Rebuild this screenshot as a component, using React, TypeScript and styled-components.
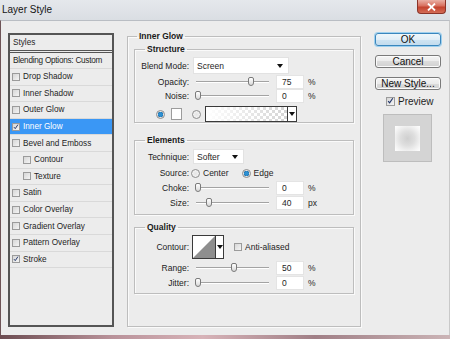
import React from "react";
import styled, { createGlobalStyle } from "styled-components";

const GlobalStyle = createGlobalStyle`
  html, body {
    margin: 0;
    padding: 0;
    background: #8d6266;
  }
  body {
    font-family: "Liberation Sans", Arial, sans-serif;
    font-size: 8.5px;
    color: #1e1e1e;
  }
`;

const Window = styled.div`
  width: 450px;
  height: 339px;
  display: flex;
  flex-direction: column;
  overflow: hidden;
  background: linear-gradient(90deg, #6d4d52 0%, #b9929a 25%, #d7b3b8 45%, #a07f86 70%, #cbb4b6 100%);
`;

const TitleBar = styled.div`
  height: 20px;
  flex: none;
  display: flex;
  align-items: flex-start;
  justify-content: space-between;
  background: linear-gradient(180deg, #e5e8ec 0%, #dadee3 100%);
`;

const Title = styled.div`
  font-size: 10px;
  line-height: 20px;
  padding-left: 2px;
  color: #151515;
`;

const CloseButton = styled.div`
  width: 29px;
  height: 14px;
  margin-right: 4px;
  box-sizing: border-box;
  display: flex;
  align-items: center;
  justify-content: center;
  border: 1px solid #8a3328;
  border-top: none;
  border-radius: 0 0 4px 4px;
  background: linear-gradient(180deg, #eab0a5 0%, #d8705f 45%, #c4432f 55%, #d36c56 100%);
`;

const Body = styled.div`
  height: 315px;
  flex: none;
  box-sizing: border-box;
  display: flex;
  align-items: flex-start;
  padding: 12px 0 0 7px;
  background: #ececec;
  border-top: 1px solid #b9bdc3;
  border-left: 1px solid #6e5457;
  border-right: 1px solid #c9c9c9;
`;

/* ---------- left list ---------- */

const StyleList = styled.div`
  width: 106px;
  height: 294px;
  box-sizing: border-box;
  border: 2px solid #555;
  background: #ececec;
  flex: none;
  font-size: 8.2px;
`;

const ListHeader = styled.div`
  height: 15px;
  line-height: 15px;
  padding-left: 3px;
  border-bottom: 3px double #555;
`;

const ListRow = styled.div<{ $h: number; $indent?: boolean; $active?: boolean; $tight?: boolean }>`
  height: ${(p) => p.$h}px;
  display: flex;
  align-items: center;
  gap: 3px;
  padding-left: ${(p) => (p.$indent ? 13 : p.$tight ? 3 : 2)}px;
  letter-spacing: ${(p) => (p.$tight ? "-0.25px" : "0")};
  border-bottom: 1px solid #d9d9d9;
  background: ${(p) => (p.$active ? "#3a97f5" : "transparent")};
  color: ${(p) => (p.$active ? "#fff" : "#1e1e1e")};
  white-space: nowrap;
  overflow: hidden;
`;

const Box = styled.span`
  width: 8px;
  height: 8px;
  flex: none;
  box-sizing: border-box;
  border: 1px solid #9b9b9b;
  background: linear-gradient(135deg, #d6d6d6 0%, #f4f4f4 100%);
  display: flex;
  align-items: center;
  justify-content: center;
`;

const Check = ({ on }: { on?: boolean }) => (
  <Box>
    {on && (
      <svg width="8" height="8" viewBox="0 0 8 8">
        <path d="M1.3 4.2 L3 6.2 L6.6 0.8" fill="none" stroke="#23366a" strokeWidth="1.3" />
      </svg>
    )}
  </Box>
);

/* ---------- group boxes ---------- */

const Group = styled.fieldset<{ $top?: number; $h?: number; $pad?: number }>`
  margin: ${(p) => p.$top ?? 0}px 0 0 0;
  padding: 0 ${(p) => p.$pad ?? 0}px 0 ${(p) => p.$pad ?? 0}px;
  border: 1px solid #bdbdbd;
  box-shadow: inset 1px 1px 0 #fafafa, 1px 1px 0 #fafafa;
  min-width: 0;
  box-sizing: border-box;
  ${(p) => (p.$h ? `height: ${p.$h}px;` : "")}
`;

const Legend = styled.legend<{ $x: number }>`
  font-weight: bold;
  font-size: 8.5px;
  line-height: 10px;
  padding: 0 2px;
  margin-left: ${(p) => p.$x}px;
  color: #1a1a1a;
`;

const MainGroup = styled(Group)`
  width: 234px;
  flex: none;
  margin: -2px 0 0 13px;
`;

const InnerBody = styled.div<{ $top: number; $bottom: number }>`
  padding: ${(p) => p.$top}px 0 ${(p) => p.$bottom}px 0;
`;

const Row = styled.div<{ $top?: number; $h: number }>`
  display: flex;
  align-items: center;
  height: ${(p) => p.$h}px;
  margin-top: ${(p) => p.$top ?? 0}px;
`;

const Label = styled.span`
  width: 54px;
  flex: none;
  text-align: right;
  margin-right: 4px;
  white-space: nowrap;
  color: #222;
`;

const Select = styled.div<{ $w: number; $h: number }>`
  width: ${(p) => p.$w}px;
  height: ${(p) => p.$h}px;
  box-sizing: border-box;
  background: #fff;
  border: 1px solid #e2e2e2;
  display: flex;
  align-items: center;
  justify-content: space-between;
  padding: 0 5px 0 3px;
`;

const Arrow = styled.span`
  width: 0;
  height: 0;
  border-left: 3px solid transparent;
  border-right: 3px solid transparent;
  border-top: 4px solid #111;
`;

const Track = styled.div`
  position: relative;
  width: 78px;
  height: 14px;
  flex: none;
  &::before {
    content: "";
    position: absolute;
    left: 3px;
    right: 2px;
    top: 6px;
    height: 1px;
    background: #a3a3a3;
    box-shadow: 0 1px 0 #fff;
  }
`;

const Thumb = styled.div`
  position: absolute;
  top: 2px;
  width: 6px;
  height: 9px;
  box-sizing: border-box;
  border: 1px solid #7a7a7a;
  border-radius: 2px 2px 3px 3px;
  background: linear-gradient(180deg, #ffffff 0%, #d9d9d9 100%);
`;

const Slider = ({ pct }: { pct: number }) => (
  <Track>
    <Thumb style={{ left: 2 + pct * 71 }} />
  </Track>
);

const Input = styled.div`
  width: 28px;
  height: 14px;
  box-sizing: border-box;
  margin-left: 5px;
  padding-left: 5px;
  background: #fff;
  border: 1px solid #e4e4e4;
  line-height: 12px;
  flex: none;
`;

const Unit = styled.span`
  margin-left: 4px;
`;

const Radio = styled.span<{ $on?: boolean; $left?: number }>`
  width: 9px;
  height: 9px;
  flex: none;
  box-sizing: border-box;
  margin-left: ${(p) => p.$left ?? 0}px;
  border-radius: 50%;
  border: 1px solid #8d8d8d;
  background: ${(p) =>
    p.$on
      ? "radial-gradient(circle, #2e8fd0 0 2px, #0f5c94 2.6px, #e3e3e3 3px, #f7f7f7 100%)"
      : "radial-gradient(circle, #e4e4e4 0%, #f8f8f8 100%)"};
`;

const RadioText = styled.span`
  margin-left: 3px;
`;

const Swatch = styled.span`
  width: 11px;
  height: 12px;
  box-sizing: border-box;
  margin-left: 6px;
  background: #fff;
  border: 1px solid #9c9c9c;
`;

const GradientBox = styled.div`
  width: 92px;
  height: 16px;
  box-sizing: border-box;
  margin-left: 4px;
  border: 1px solid #3a3a3a;
  display: flex;
`;

const GradientFill = styled.div`
  flex: 1;
  background: linear-gradient(90deg, #fff 0%, rgba(255, 255, 255, 0) 100%),
    repeating-conic-gradient(#d4d4d4 0 25%, #fff 0 50%) 0 0 / 6px 6px;
`;

const DropPart = styled.div`
  width: 8px;
  border-left: 1px solid #3a3a3a;
  background: #fff;
  display: flex;
  align-items: center;
  justify-content: center;
`;

const ContourBox = styled.div`
  width: 32px;
  height: 24px;
  box-sizing: border-box;
  border: 1px solid #3a3a3a;
  display: flex;
  margin-left: -1px;
`;

const ContourArt = styled.div`
  flex: 1;
  background: #fff;
  display: flex;
`;

const TextCheck = styled.span`
  margin-left: 3px;
`;

/* ---------- right column ---------- */

const SideColumn = styled.div`
  width: 66px;
  flex: none;
  margin-left: 14px;
  display: flex;
  flex-direction: column;
`;

const Button = styled.div<{ $primary?: boolean }>`
  height: 13px;
  margin-bottom: 9px;
  box-sizing: border-box;
  border: 1px solid ${(p) => (p.$primary ? "#3a86bd" : "#7a7a7a")};
  border-radius: 3px;
  background: ${(p) =>
    p.$primary
      ? "linear-gradient(180deg, #eef6fb 0%, #e1eef7 50%, #cfe4f2 50%, #c3dcee 100%)"
      : "linear-gradient(180deg, #f4f4f4 0%, #ebebeb 50%, #dcdcdc 50%, #d1d1d1 100%)"};
  box-shadow: ${(p) => (p.$primary ? "0 0 0 1px #9fd0ee" : "inset 0 0 0 1px #fbfbfb")};
  font-size: 10px;
  line-height: 11px;
  text-align: center;
  color: #111;
`;

const PreviewRow = styled.div`
  display: flex;
  align-items: center;
  gap: 3px;
  margin: -4px 0 0 11px;
  height: 12px;
  font-size: 10px;
  & > span:first-child {
    width: 9px;
    height: 9px;
  }
`;

const PreviewBox = styled.div`
  width: 49px;
  height: 48px;
  box-sizing: border-box;
  margin: 7px 0 0 8px;
  background: #d4d4d4;
  border: 1px solid #bdbdbd;
  display: flex;
  align-items: center;
  justify-content: center;
`;

const PreviewSwatch = styled.div`
  width: 25px;
  height: 25px;
  background: radial-gradient(circle, #cfcfcf 0%, #dedede 40%, #f3f3f3 75%, #ffffff 100%);
`;

const items: { name: string; on?: boolean; indent?: boolean; active?: boolean }[] = [
  { name: "Drop Shadow" },
  { name: "Inner Shadow" },
  { name: "Outer Glow" },
  { name: "Inner Glow", on: true, active: true },
  { name: "Bevel and Emboss" },
  { name: "Contour", indent: true },
  { name: "Texture", indent: true },
  { name: "Satin" },
  { name: "Color Overlay" },
  { name: "Gradient Overlay" },
  { name: "Pattern Overlay" },
  { name: "Stroke", on: true },
];

const SliderRow = ({
  label,
  pct,
  value,
  unit,
  top,
}: {
  label: string;
  pct: number;
  value: string;
  unit: string;
  top?: number;
}) => (
  <Row $top={top} $h={14}>
    <Label>{label}</Label>
    <Slider pct={pct} />
    <Input>{value}</Input>
    <Unit>{unit}</Unit>
  </Row>
);

export default function App() {
  return (
    <>
      <GlobalStyle />
      <Window>
        <TitleBar>
          <Title>Layer Style</Title>
          <CloseButton>
            <svg width="9" height="8" viewBox="0 0 9 8">
              <path d="M1 0.5 L8 7.5 M8 0.5 L1 7.5" stroke="#fff" strokeWidth="1.8" />
            </svg>
          </CloseButton>
        </TitleBar>
        <Body>
          <StyleList>
            <ListHeader>Styles</ListHeader>
            <ListRow $h={15} $tight>
              Blending Options: Custom
            </ListRow>
            {items.map((it) => (
              <ListRow key={it.name} $h={15.6} $indent={it.indent} $active={it.active}>
                <Check on={it.on} />
                {it.name}
              </ListRow>
            ))}
          </StyleList>

          <MainGroup $h={296} $pad={6}>
            <Legend $x={3}>Inner Glow</Legend>
            <InnerBody $top={3} $bottom={0}>
              <Group>
                <Legend $x={10}>Structure</Legend>
                <InnerBody $top={0} $bottom={0}>
                  <Row $top={3} $h={17}>
                    <Label>Blend Mode:</Label>
                    <Select $w={96} $h={17}>
                      Screen
                      <Arrow />
                    </Select>
                  </Row>
                  <SliderRow label="Opacity:" pct={0.75} value="75" unit="%" top={1} />
                  <SliderRow label="Noise:" pct={0} value="0" unit="%" />
                  <Row $top={3} $h={16}>
                    <Radio $on $left={21} />
                    <Swatch />
                    <Radio $left={10} />
                    <GradientBox>
                      <GradientFill />
                      <DropPart>
                        <Arrow />
                      </DropPart>
                    </GradientBox>
                  </Row>
                </InnerBody>
              </Group>

              <Group $top={12}>
                <Legend $x={10}>Elements</Legend>
                <InnerBody $top={0} $bottom={4}>
                  <Row $top={4} $h={15}>
                    <Label>Technique:</Label>
                    <Select $w={51} $h={15}>
                      Softer
                      <Arrow />
                    </Select>
                  </Row>
                  <Row $top={2} $h={14}>
                    <Label style={{ marginRight: 2 }}>Source:</Label>
                    <Radio />
                    <RadioText>Center</RadioText>
                    <Radio $on $left={13} />
                    <RadioText>Edge</RadioText>
                  </Row>
                  <SliderRow label="Choke:" pct={0} value="0" unit="%" top={1} />
                  <SliderRow label="Size:" pct={0.16} value="40" unit="px" top={1} />
                </InnerBody>
              </Group>

              <Group $top={7}>
                <Legend $x={10}>Quality</Legend>
                <InnerBody $top={0} $bottom={3}>
                  <Row $top={3} $h={24}>
                    <Label>Contour:</Label>
                    <ContourBox>
                      <ContourArt>
                        <svg width="22" height="22" viewBox="0 0 22 22" preserveAspectRatio="none">
                          <polygon points="0,22 22,0 22,22" fill="#8e8e8e" />
                        </svg>
                      </ContourArt>
                      <DropPart>
                        <Arrow />
                      </DropPart>
                    </ContourBox>
                    <span style={{ marginLeft: 10 }}>
                      <Check />
                    </span>
                    <TextCheck>Anti-aliased</TextCheck>
                  </Row>
                  <SliderRow label="Range:" pct={0.5} value="50" unit="%" top={2} />
                  <SliderRow label="Jitter:" pct={0} value="0" unit="%" top={1} />
                </InnerBody>
              </Group>
            </InnerBody>
          </MainGroup>

          <SideColumn>
            <Button $primary>OK</Button>
            <Button>Cancel</Button>
            <Button>New Style...</Button>
            <PreviewRow>
              <Check on />
              Preview
            </PreviewRow>
            <PreviewBox>
              <PreviewSwatch />
            </PreviewBox>
          </SideColumn>
        </Body>
      </Window>
    </>
  );
}
